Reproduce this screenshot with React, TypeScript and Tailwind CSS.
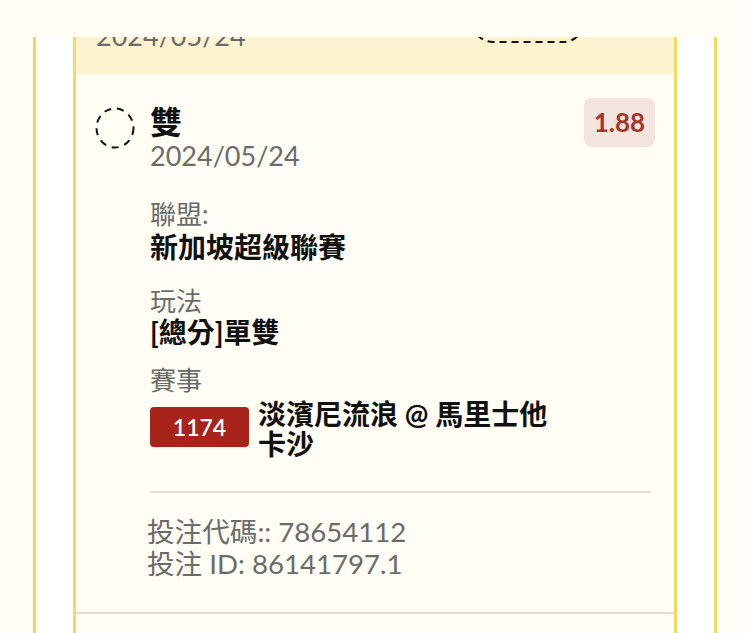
import React from "react";

export default function App() {
  return (
    <div className="w-[750px] h-[633px] overflow-hidden bg-[#fffdf4] font-['Lato','Noto_Sans_CJK_TC',sans-serif] flex flex-col">
      <div className="h-[37px] shrink-0 bg-[#fffdf4]" />
      <div className="mx-[33px] flex-1 border-x-[3px] border-[#f4d862] bg-white px-[37px]">
        <div className="h-full border-x-[3px] border-[#f4d862] bg-[#fffdf4]">
          {/* previous row, cut off */}
          <div className="h-[37px] overflow-hidden bg-[#fdf3d1]">
            <div className="flex items-start pl-[20px] mt-[-17px]">
              <div className="text-[27px] leading-[32px] text-[#6b6b6b]">2024/05/24</div>
              <svg width="114" height="44" className="ml-[225px] mt-[-21px]" viewBox="0 0 114 44">
                <rect x="1" y="1" width="112" height="42" rx="21" fill="none" stroke="#111" strokeWidth="2" strokeDasharray="7 5" />
              </svg>
            </div>
          </div>
          {/* current row */}
          <div className="flex items-start pl-[19px] pr-[19px] pt-[24px] pb-[32px] border-b-2 border-[#e2dfd6]">
            <svg width="40" height="42" viewBox="0 0 40 42" className="mt-[9px] shrink-0">
              <ellipse cx="20" cy="21" rx="18.5" ry="19.5" fill="none" stroke="#111" strokeWidth="2" strokeDasharray="7 6" />
            </svg>
            <div className="ml-[15px] flex-1 flex flex-col">
              <div className="flex items-start justify-between">
                <div className="mt-[6px]">
                  <div className="text-[32px] leading-[36px] font-bold text-[#111]">雙</div>
                  <div className="text-[27px] leading-[32px] text-[#6b6b6b]">2024/05/24</div>
                </div>
                <div className="w-[71px] h-[49px] rounded-[8px] bg-[#f3e4de] flex items-center justify-center text-[26px] font-bold text-[#a3352a]">
                  1.88
                </div>
              </div>
              <div className="mt-[26px] text-[26px] leading-[32px] text-[#6b6b6b]">聯盟:</div>
              <div className="text-[28px] leading-[34px] font-bold text-[#111]">新加坡超級聯賽</div>
              <div className="mt-[21px] text-[26px] leading-[32px] text-[#6b6b6b]">玩法</div>
              <div className="text-[28px] leading-[30px] font-bold text-[#111]">[總分]單雙</div>
              <div className="mt-[17px] text-[26px] leading-[32px] text-[#6b6b6b]">賽事</div>
              <div className="mt-[3px] flex items-start">
                <div className="mt-[8px] w-[99px] h-[40px] rounded-[4px] bg-[#a8231a] flex items-center justify-center text-[23px] font-semibold text-white">
                  1174
                </div>
                <div className="ml-[9px] w-[292px] text-[28px] leading-[30px] font-bold text-[#111]">
                  淡濱尼流浪 @ 馬里士他卡沙
                </div>
              </div>
              <div className="mt-[32px] mr-[4px] h-[2px] bg-[#e2dfd6]" />
              <div className="mt-[23px] text-[27.6px] leading-[32px] text-[#6b6b6b] ml-[-3px]">
                <div>投注代碼:: 78654112</div>
                <div>投注 ID: 86141797.1</div>
              </div>
            </div>
          </div>
        </div>
      </div>
    </div>
  );
}
